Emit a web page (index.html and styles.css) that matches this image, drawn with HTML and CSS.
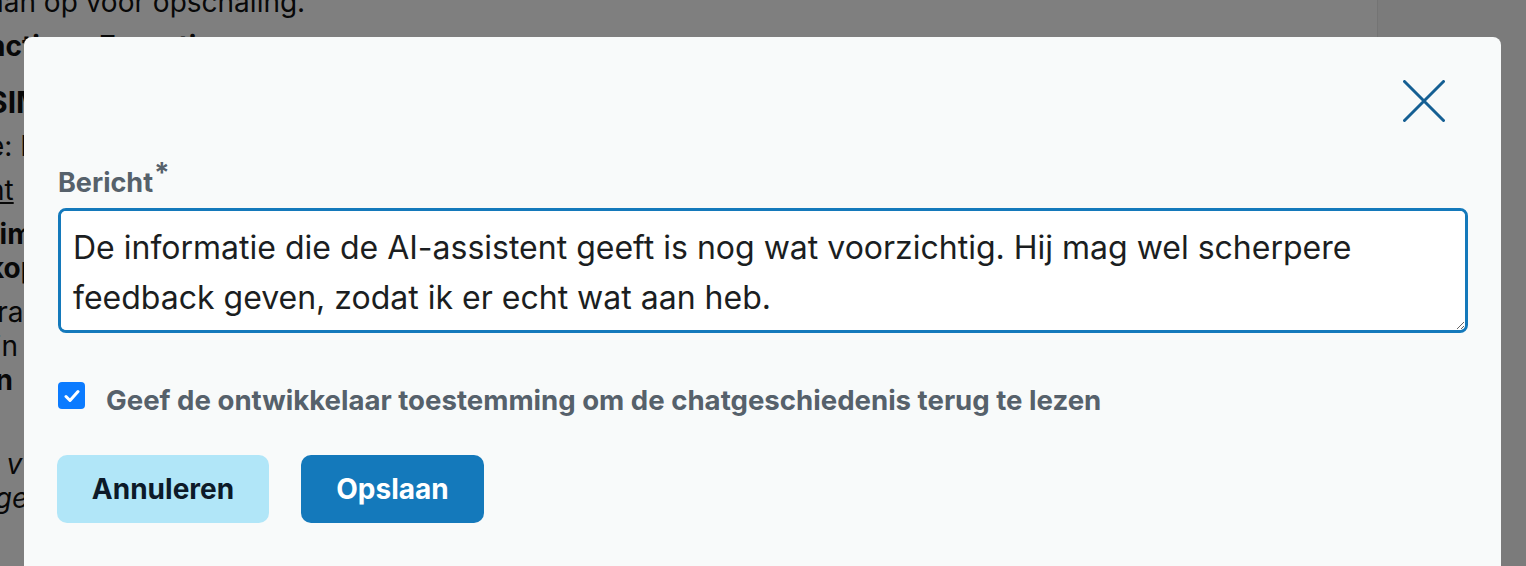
FILE: index.html
```
<!DOCTYPE html>
<html lang="nl">
<head>
<meta charset="utf-8">
<title>Feedback</title>
<link rel="stylesheet" href="styles.css">
</head>
<body>
<div class="page">
  <main class="content">
    <p class="bg-line first">aan op voor opschaling.</p>
    <p class="bg-line bold">nctie: &nbsp;&nbsp;&nbsp;&nbsp;Expertise</p>
    <p class="bg-line bold big">SIM</p>
    <p class="bg-line">e: Leerdoel</p>
    <p class="bg-line link">nt</p>
    <p class="bg-line bold">rimair</p>
    <p class="bg-line bold tight">kop</p>
    <p class="bg-line">tra</p>
    <p class="bg-line tight">ijn</p>
    <p class="bg-line bold tight">in</p>
    <p class="bg-line italic gap">r v</p>
    <p class="bg-line italic tight">ige</p>
  </main>
  <aside class="sidebar"></aside>
</div>
<div class="overlay"></div>
<div class="modal" role="dialog" aria-modal="true">
  <div class="modal-head">
    <button class="close" type="button" aria-label="Sluiten">
      <svg width="42" height="42" viewBox="0 0 42 42" aria-hidden="true"><path d="M1.5 1.5 L40.5 40.5 M40.5 1.5 L1.5 40.5" stroke="#155f93" stroke-width="3" stroke-linecap="round" fill="none"/></svg>
    </button>
  </div>
  <label class="field-label" for="msg">Bericht<sup>*</sup></label>
  <textarea id="msg" class="message">De informatie die de AI-assistent geeft is nog wat voorzichtig. Hij mag wel scherpere feedback geven, zodat ik er echt wat aan heb.</textarea>
  <label class="consent">
    <span class="check"><svg width="16" height="14" viewBox="0 0 16 14" aria-hidden="true"><path d="M2 7.5 L6 11.5 L14 2.5" stroke="#fff" stroke-width="3" stroke-linecap="round" stroke-linejoin="round" fill="none"/></svg></span>
    <span class="consent-text">Geef de ontwikkelaar toestemming om de chatgeschiedenis terug te lezen</span>
  </label>
  <div class="actions">
    <button class="btn btn-secondary" type="button">Annuleren</button>
    <button class="btn btn-primary" type="button">Opslaan</button>
  </div>
</div>
</body>
</html>
```
FILE: styles.css
```
* { box-sizing: border-box; }
html, body { margin: 0; padding: 0; }
body {
  width: 1526px;
  height: 566px;
  overflow: hidden;
  font-family: Inter, "Liberation Sans", sans-serif;
  background: #fff;
}
.page {
  display: flex;
  height: 566px;
}
.content {
  flex: 0 0 1377px;
  color: #111;
  font-size: 28px;
  overflow: hidden;
  white-space: nowrap;
}
.bg-line {
  margin: 0;
  line-height: 44px;
  text-indent: -12px;
}
.bg-line.first { margin-top: -20px; }
.bg-line.bold { font-weight: 700; }
.bg-line.big { font-size: 30px; margin-top: 12px; }
.bg-line.link { text-decoration: underline; }
.bg-line.tight { margin-top: -10px; }
.bg-line.italic { font-style: italic; }
.bg-line.gap { margin-top: 40px; }
.sidebar {
  flex: 1;
  background: #f6f7f7;
  border-left: 1px solid #e9e9e9;
}
.overlay {
  position: fixed;
  inset: 0;
  background: rgba(0, 0, 0, 0.5);
}
.modal {
  position: absolute;
  left: 24px;
  top: 37px;
  width: 1477px;
  height: 600px;
  background: #f8fafa;
  border-radius: 8px;
  padding: 43px 32px 40px 34px;
  display: flex;
  flex-direction: column;
  align-items: flex-start;
}
.modal-head {
  align-self: stretch;
  display: flex;
  justify-content: flex-end;
  padding-right: 24px;
}
.close {
  width: 42px;
  height: 42px;
  padding: 0;
  border: 0;
  background: none;
  display: block;
}
.close svg { display: block; }
.field-label {
  margin-top: 45px;
  font-size: 27px;
  line-height: 32px;
  font-weight: 700;
  color: #56616b;
}
.field-label sup {
  font-size: 28px;
  line-height: 0;
  vertical-align: 9px;
  margin-left: 1px;
}
.message {
  margin-top: 9px;
  width: 1410px;
  height: 125px;
  border: 3px solid #1479bb;
  border-radius: 8px;
  background: #fff;
  padding: 12px 12px;
  font-family: Inter, "Liberation Sans", sans-serif;
  font-size: 32px;
  line-height: 50px;
  color: #1b1e21;
  resize: vertical;
  outline: none;
}
.consent {
  margin-top: 49px;
  display: flex;
  align-items: flex-start;
  gap: 21px;
}
.check {
  width: 27px;
  height: 27px;
  border-radius: 4px;
  background: #0b7bff;
  display: flex;
  align-items: center;
  justify-content: center;
}
.check svg { display: block; }
.consent-text {
  padding-top: 2px;
  font-size: 27.6px;
  line-height: 33px;
  font-weight: 700;
  color: #56616b;
}
.actions {
  margin-top: 38px;
  display: flex;
  gap: 32px;
  margin-left: -1px;
}
.btn {
  height: 68px;
  border: 0;
  border-radius: 10px;
  padding: 0;
  font-family: Inter, "Liberation Sans", sans-serif;
  font-size: 28px;
  font-weight: 700;
}
.btn-secondary {
  width: 212px;
  background: #b1e6f8;
  color: #0c1a29;
}
.btn-primary {
  width: 183px;
  background: #1479bb;
  color: #fff;
}
```
